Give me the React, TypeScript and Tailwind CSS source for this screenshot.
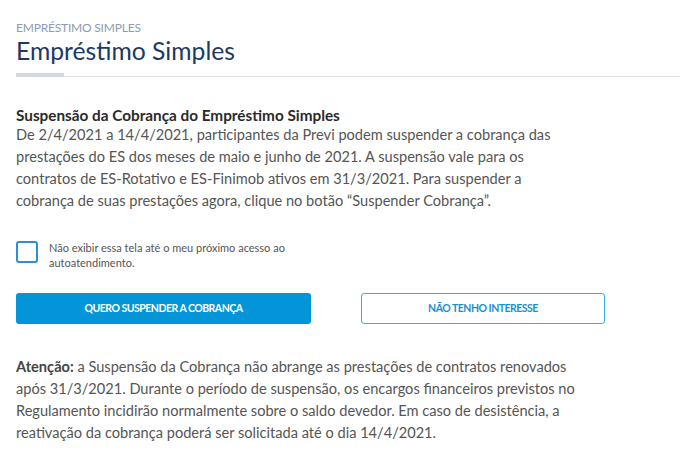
export default function App() {
  return (
    <div className="w-[680px] h-[460px] bg-white overflow-hidden" style={{ fontFamily: "Lato, 'Open Sans', sans-serif" }}>
      <div className="pl-4 pt-[21px]">
        <div className="text-[12px] leading-[14px] text-[#8a9bb4] tracking-[-0.2px]">EMPRÉSTIMO SIMPLES</div>
        <div className="text-[24.7px] leading-[30px] text-[#1c3a63] mt-[1px]">Empréstimo Simples</div>
        <div className="relative mt-[7px] h-[4px]">
          <div className="absolute left-0 bottom-0 right-0 h-px bg-[#dde2ea]" />
          <div className="absolute left-0 top-0 w-[48px] h-[4px] bg-[#d3dae3]" />
        </div>
      </div>
      <div className="px-4 pt-[30px] w-[680px]">
        <div className="text-[15.3px] leading-[16px] font-bold text-[#2a2a2a]">Suspensão da Cobrança do Empréstimo Simples</div>
        <p className="text-[14.6px] leading-[22px] text-[#555] w-[560px] mt-[1px]">
          De 2/4/2021 a 14/4/2021, participantes da Previ podem suspender a cobrança das prestações do ES dos meses de maio e junho de 2021. A suspensão vale para os contratos de ES-Rotativo e ES-Finimob ativos em 31/3/2021. Para suspender a cobrança de suas prestações agora, clique no botão “Suspender Cobrança”.
        </p>
        <div className="flex items-start mt-[29px]">
          <div className="w-[22px] h-[22px] border-2 border-[#2b8fd6] rounded-[3px] shrink-0" />
          <div className="ml-[11px] -mt-[1px] text-[11px] leading-[15px] text-[#555] w-[250px]">
            Não exibir essa tela até o meu próximo acesso ao autoatendimento.
          </div>
        </div>
        <div className="flex mt-[23px]">
          <button className="w-[295px] h-[31px] bg-[#0395d8] rounded-[3px] text-white text-[10.5px] font-bold tracking-[-0.5px]">
            QUERO SUSPENDER A COBRANÇA
          </button>
          <button className="ml-[50px] w-[244px] h-[31px] border border-[#3aafe6] rounded-[3px] text-[#1a8fd0] text-[10.5px] font-bold tracking-[-0.5px] bg-white">
            NÃO TENHO INTERESSE
          </button>
        </div>
        <p className="mt-[32px] text-[14.6px] leading-[22px] text-[#555] w-[570px]">
          <span className="font-bold text-[#444]">Atenção:</span> a Suspensão da Cobrança não abrange as prestações de contratos renovados após 31/3/2021. Durante o período de suspensão, os encargos financeiros previstos no Regulamento incidirão normalmente sobre o saldo devedor. Em caso de desistência, a reativação da cobrança poderá ser solicitada até o dia 14/4/2021.
        </p>
      </div>
    </div>
  );
}
